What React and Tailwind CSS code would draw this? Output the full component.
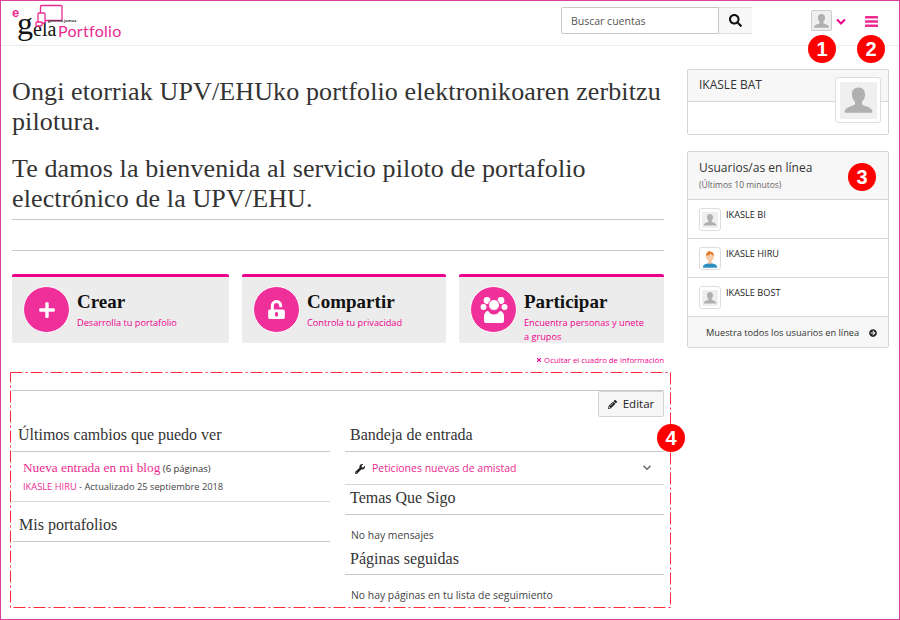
import React from "react";
import { FaSearch, FaPlus, FaUnlockAlt, FaTimes, FaPencilAlt, FaWrench, FaArrowCircleRight } from "react-icons/fa";

const serif = "font-['Roboto_Slab','Liberation_Serif',serif]";

function Silhouette({ className }) {
  return (
    <svg viewBox="0 0 40 40" className={className}>
      <path d="M20 5c-5 0-7.500 3.500-7.500 8 0 3.500 1.500 6.500 3.500 8.500v3c-3 2-10 3-11.500 6.500-.6 1.500-.5 3 .5 3h30c1 0 1.100-1.500.5-3-1.500-3.500-8.500-4.500-11.500-6.500v-3c2-2 3.500-5 3.500-8.500 0-4.500-2.500-8-7.500-8z" fill="#b0b0b0" />
    </svg>
  );
}

function Person() {
  return (
    <svg viewBox="0 0 20 22" className="w-[16px] h-[18px]">
      <path d="M1 22c0-4 3-5 9-6 6 1 9 2 9 6z" fill="#2f8fc0" />
      <rect x="8" y="12" width="4" height="5" fill="#f5c09a" />
      <circle cx="10" cy="8" r="5" fill="#f7cba8" />
      <path d="M5 7c0-4 3-6 5-6 1 0 0 1 1 1 2 0 4 2 4 5-2-1-3-2-4-3-1 2-4 3-6 3z" fill="#e8792b" />
    </svg>
  );
}

function Group() {
  return (
    <svg viewBox="0 0 30 30" className="w-[30px] h-[30px]" fill="#fff">
      <circle cx="8" cy="5.500" r="3.400" />
      <circle cx="22" cy="5.500" r="3.400" />
      <circle cx="4.500" cy="12" r="3" />
      <circle cx="25.500" cy="12" r="3" />
      <circle cx="15" cy="10" r="5.500" stroke="#f0309a" strokeWidth="1" />
      <path d="M7 28c-1 0-2-1-2-2v-5c0-3 2-5 4-5 2 2.500 3.500 3.500 6 3.500s4-1 6-3.500c2 0 4 2 4 5v5c0 1-1 2-2 2z" />
    </svg>
  );
}

function Badge({ n, className }) {
  return (
    <div className={`absolute w-[28px] h-[28px] rounded-full bg-[#ff0000] text-white flex items-center justify-center text-[20px] font-bold font-['Liberation_Sans',sans-serif] ${className}`}>
      {n}
    </div>
  );
}

function Card({ icon, title, sub, className }) {
  return (
    <div className={`h-[69px] bg-[#ececec] border-t-[3px] border-[#ec008c] rounded-[2px] flex pl-[11px] pt-[9px] ${className}`}>
      <div className="w-[47px] h-[47px] shrink-0 rounded-full bg-[#f0309a] border border-white flex items-center justify-center text-white">
        {icon}
      </div>
      <div className="ml-[7px] min-w-0">
        <div className={`${serif} text-[19px] leading-[24px] mt-[4px] font-bold text-[#111]`}>{title}</div>
        <div className="text-[9.200px] leading-[14px] mt-[2px] text-[#ec008c] w-[124px]">{sub}</div>
      </div>
    </div>
  );
}

function H({ children, className = "" }) {
  return <div className={`${serif} text-[16px] leading-[20px] text-[#333] ${className}`}>{children}</div>;
}

function OnlineRow({ name, children }) {
  return (
    <div className="h-[39px] border-b border-[#d6d6d6] flex pl-[11px] pt-[8px]">
      <div className="w-[22px] h-[23px] border border-[#ddd] rounded-[3px] bg-white flex items-center justify-center">
        {children}
      </div>
      <div className="ml-[5px] mt-[1px] text-[9.200px] leading-[12px] text-[#222]">{name}</div>
    </div>
  );
}

export default function App() {
  return (
    <div className="relative w-[900px] h-[620px] bg-white overflow-hidden font-['Open_Sans',sans-serif] text-[#333]">
      <div className="absolute inset-0 border-[1.500px] border-[#e0409a] pointer-events-none z-20" />

      <header className="h-[46px] border-b border-[#ececec] flex items-center relative">
        <div className="relative w-[130px] h-[44px] ml-[12px]">
          <span className="absolute left-0 top-[8px] text-[#ec2a90] text-[13px] leading-[8px] font-bold font-['Liberation_Sans',sans-serif]">e</span>
          <span className="absolute left-[5px] top-[16px] text-[32px] leading-[12px] text-[#111] font-['Liberation_Serif',serif]">g</span>
          <span className="absolute left-[21px] top-[22px] text-[20px] leading-[12px] text-[#111] font-['Liberation_Serif',serif]">ela</span>
          <span className="absolute left-[46px] top-[24px] text-[16px] leading-[12px] text-[#ec2a90] font-['Lato',sans-serif] tracking-[0.300px]">Portfolio</span>
          <svg viewBox="12 0 60 30" className="absolute left-0 top-0 w-[60px] h-[30px]" fill="none" stroke="#ec2a90" strokeWidth="1.300">
            <rect x="40.500" y="4.500" width="21.500" height="15" rx="1" />
            <rect x="38" y="12" width="7" height="10" rx="1" fill="#fff" />
            <rect x="36" y="21" width="6" height="4" rx="1" fill="#fff" />
          </svg>
          <span className="absolute left-[36px] top-[18px] text-[4px] leading-[4px] font-bold text-[#333] whitespace-nowrap">gemma.jomos</span>
        </div>

        <div className="absolute left-[561px] top-[7px] flex h-[27px]">
          <div className="w-[158px] border border-[#c8c8c8] rounded-l-[2px] text-[10.500px] leading-[26px] pl-[9px] text-[#555]">Buscar cuentas</div>
          <div className="w-[33px] border-y border-[#e0e0e0] bg-[#f7f7f7] flex items-center justify-center text-[#111]">
            <FaSearch className="w-[13px] h-[13px]" />
          </div>
        </div>

        <div className="absolute left-[811px] top-[10px] w-[21px] h-[21px] border border-[#ccc] rounded-[2px] bg-[#efefef] flex items-center justify-center">
          <Silhouette className="w-[20px] h-[20px]" />
        </div>
        <svg viewBox="0 0 10 7" className="absolute left-[836px] top-[18px] w-[10px] h-[7px]" fill="none" stroke="#ec008c" strokeWidth="2">
          <path d="M1 1.500l4 4 4-4" />
        </svg>
        <svg viewBox="0 0 13 11" className="absolute left-[865px] top-[16px] w-[13px] h-[11px]" fill="#ec2a90">
          <rect width="13" height="2.400" rx="0.500" />
          <rect y="4.300" width="13" height="2.400" rx="0.500" />
          <rect y="8.600" width="13" height="2.400" rx="0.500" />
        </svg>
      </header>

      <div className="flex pl-[12px] pr-[11px] pt-[24px]">
        <main className="w-[652px]">
          <div className={`text-[26px] leading-[30px] tracking-[0.120px] text-[#333] ${serif} pt-[7px]`}>
            <p>Ongi etorriak UPV/EHUko portfolio elektronikoaren zerbitzu pilotura.</p>
            <p className="mt-[17px] w-[620px]">Te damos la bienvenida al servicio piloto de portafolio electrónico de la UPV/EHU.</p>
          </div>
          <div className="mt-[5px] border-t border-[#c8c8c8]" />
          <div className="mt-[30px] border-t border-[#c8c8c8]" />

          <div className="flex mt-[23px] gap-[13px]">
            <Card className="w-[217px]" icon={<FaPlus className="w-[18px] h-[18px]" />} title="Crear" sub="Desarrolla tu portafolio" />
            <Card className="w-[204px]" icon={<FaUnlockAlt className="w-[17px] h-[19px]" />} title="Compartir" sub="Controla tu privacidad" />
            <Card className="w-[205px]" icon={<Group />} title="Participar" sub="Encuentra personas y unete a grupos" />
          </div>

          <div className="mt-[11px] flex justify-end items-center text-[7.800px] leading-[12px] text-[#ec008c]">
            <FaTimes className="w-[6px] h-[6px] mr-[2px]" />Ocultar el cuadro de información
          </div>

          <div className="mt-[24px] border-t border-[#c8c8c8]">
            <div className="flex justify-end">
              <div className="w-[66px] h-[26px] border border-[#d4d4d4] rounded-[2px] bg-[#f6f6f6] flex items-center justify-center text-[11.500px] text-[#222]">
                <FaPencilAlt className="w-[9px] h-[9px] mr-[6px]" />Editar
              </div>
            </div>
            <div className="flex gap-[15px] mt-[8px]">
              <div className="w-[318px]">
                <H className="pl-[6px] pb-[6px] border-b border-[#c8c8c8]">Últimos cambios que puedo ver</H>
                <div className="h-[50px] border-b border-[#d6d6d6] pl-[11px] pt-[6px]">
                  <div className="leading-[16px]">
                    <span className={`${serif} text-[13.300px] text-[#ec2a90]`}>Nueva entrada en mi blog</span>
                    <span className="text-[9.500px] text-[#333]"> (6 páginas)</span>
                  </div>
                  <div className="text-[9.300px] leading-[14px] mt-[3px] text-[#444]"><span className="text-[#ec2a90]">IKASLE HIRU</span> - Actualizado 25 septiembre 2018</div>
                </div>
                <H className="pl-[6px] pt-[13px] pb-[6px] border-b border-[#c8c8c8] ml-[1px]">Mis portafolios</H>
              </div>
              <div className="w-[319px]">
                <H className="pl-[5px] pb-[6px] border-b border-[#c8c8c8]">Bandeja de entrada</H>
                <div className="h-[33px] border-b border-[#d6d6d6] pl-[10px] pt-[1px] flex items-center text-[10.500px] text-[#ec2a90]">
                  <FaWrench className="w-[10px] h-[10px] mr-[7px] text-[#222]" />Peticiones nuevas de amistad
                  <svg viewBox="0 0 8 5" className="w-[8px] h-[5px] ml-auto mr-[13px] -mt-[3px]" fill="none" stroke="#666" strokeWidth="1.500">
                    <path d="M.5 .7l3.500 3.500 3.500-3.500" />
                  </svg>
                </div>
                <H className="pl-[5px] pt-[3px] pb-[6px] border-b border-[#c8c8c8]">Temas Que Sigo</H>
                <div className="pl-[6px] mt-[13px] text-[10.400px] leading-[14px] text-[#444]">No hay mensajes</div>
                <H className="pl-[5px] mt-[7px] pb-[5px] border-b border-[#c8c8c8]">Páginas seguidas</H>
                <div className="pl-[6px] mt-[13px] text-[10.400px] leading-[14px] text-[#444]">No hay páginas en tu lista de seguimiento</div>
              </div>
            </div>
          </div>
        </main>

        <aside className="w-[202px] ml-[23px] -mt-[1px]">
          <div className="relative h-[66px] border border-[#d6d6d6] rounded-[2px]">
            <div className="h-[32px] bg-[#f7f7f7] border-b border-[#d6d6d6] pl-[11px] text-[12px] leading-[30px] text-[#333]">IKASLE BAT</div>
            <div className="absolute left-[147px] top-[7px] w-[46px] h-[46px] border border-[#ddd] rounded-[3px] bg-white flex items-center justify-center">
              <div className="w-[37px] h-[37px] bg-[#efefef] flex items-center justify-center">
                <Silhouette className="w-[35px] h-[35px]" />
              </div>
            </div>
          </div>

          <div className="mt-[16px] border border-[#d6d6d6] rounded-[2px]">
            <div className="h-[48px] bg-[#f7f7f7] border-b border-[#d6d6d6] pl-[11px] pt-[7px]">
              <div className="text-[12px] leading-[18px] text-[#333]">Usuarios/as en línea</div>
              <div className="text-[8.500px] leading-[12px] mt-[2px] text-[#666]">(Últimos 10 minutos)</div>
            </div>
            <OnlineRow name="IKASLE BI"><Silhouette className="w-[16px] h-[16px] bg-[#efefef]" /></OnlineRow>
            <OnlineRow name="IKASLE HIRU"><Person /></OnlineRow>
            <OnlineRow name="IKASLE BOST"><Silhouette className="w-[16px] h-[16px] bg-[#efefef]" /></OnlineRow>
            <div className="h-[30px] bg-[#f7f7f7] flex items-center pl-[18px] pt-[1px] text-[9.250px] text-[#333]">
              Muestra todos los usuarios en línea
              <FaArrowCircleRight className="w-[8px] h-[8px] ml-[10px] text-[#222]" />
            </div>
          </div>
        </aside>
      </div>

      <svg className="absolute left-[10px] top-[372px] w-[662px] h-[236px] pointer-events-none overflow-visible" fill="none">
        <rect x="0.500" y="0.500" width="660" height="235" stroke="#ff2a3a" strokeWidth="1" strokeDasharray="12 3 2 3" />
      </svg>

      <Badge n="1" className="left-[808px] top-[35px]" />
      <Badge n="2" className="left-[857px] top-[35px]" />
      <Badge n="3" className="left-[848px] top-[163px]" />
      <Badge n="4" className="left-[657px] top-[424px]" />
    </div>
  );
}
